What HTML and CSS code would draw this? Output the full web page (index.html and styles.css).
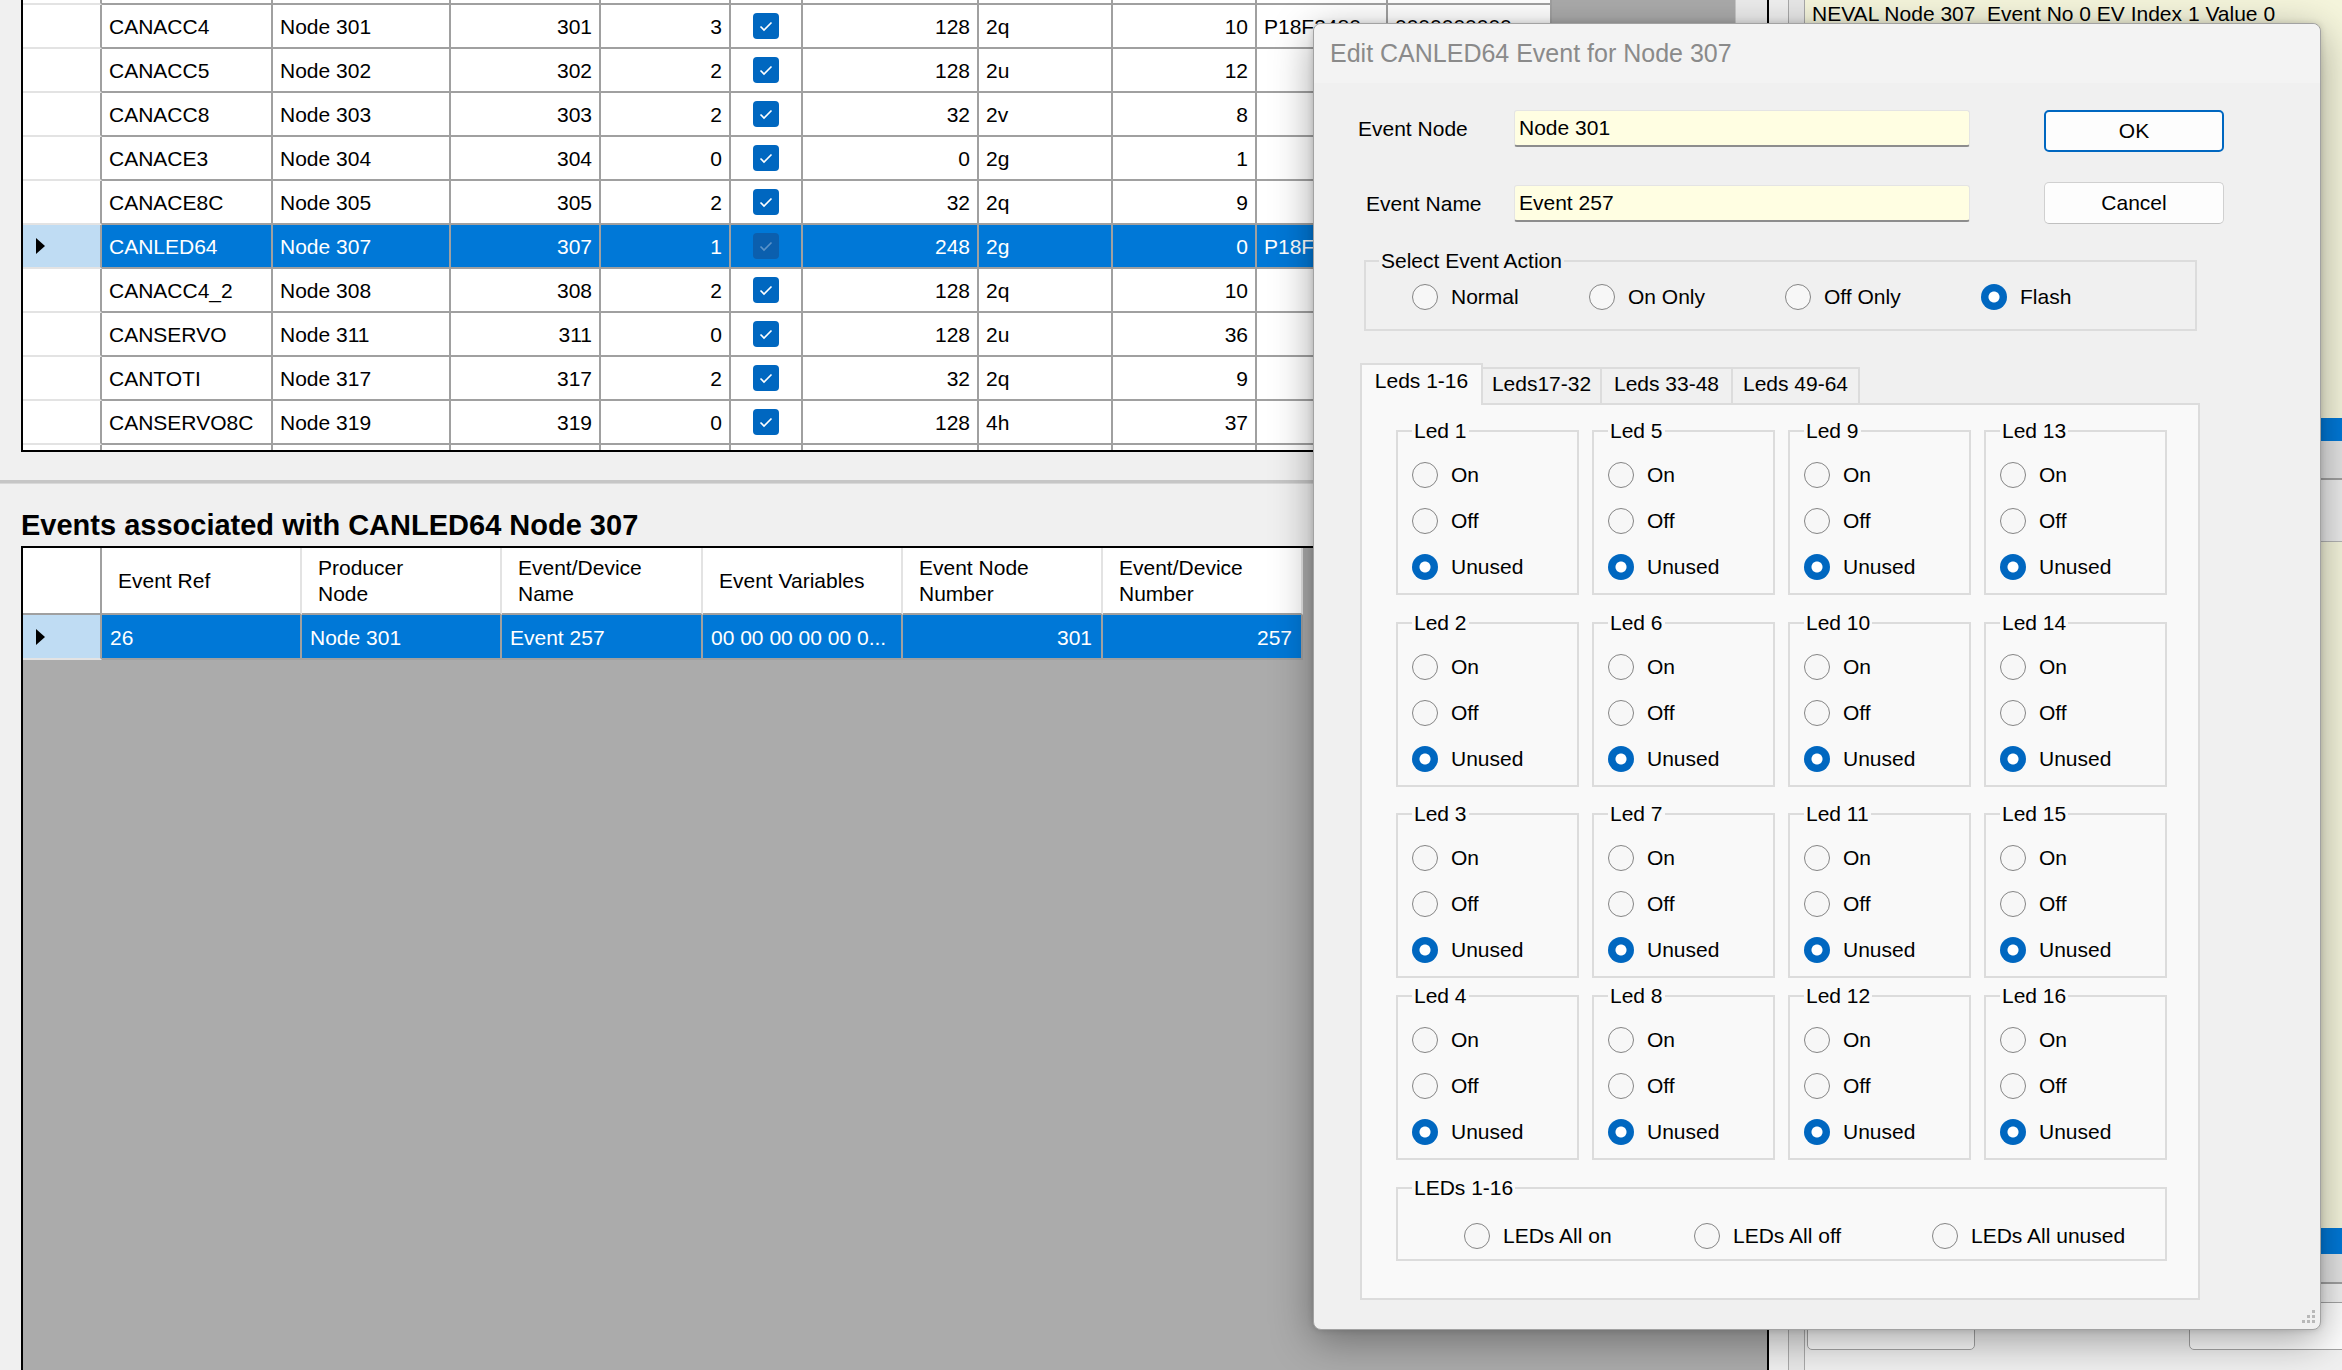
FILE: index.html
```html
<!DOCTYPE html>
<html>
<head>
<meta charset="utf-8">
<link rel="stylesheet" href="styles.css">
</head>
<body>
<div class="app">
  <div class="left">
    <div class="top-grid">
      <div class="rows">
        <div class="row stub"><div class="c rh"></div><div class="c"></div><div class="c"></div><div class="c"></div><div class="c"></div><div class="c"></div><div class="c"></div><div class="c"></div><div class="c"></div><div class="c"></div><div class="c"></div></div>
        <div class="row"><div class="c rh"></div><div class="c">CANACC4</div><div class="c">Node 301</div><div class="c r">301</div><div class="c r">3</div><div class="c ctr"><svg class="cb" width="26" height="26" viewBox="0 0 26 26"><rect width="26" height="26" rx="4" fill="#0067c0"/><path d="M7.5 13.5l3.5 3.5 7.5-7.5" fill="none" stroke="#fff" stroke-width="1.6"/></svg></div><div class="c r">128</div><div class="c">2q</div><div class="c r">10</div><div class="c">P18F2480</div><div class="c">0000000000</div></div>
        <div class="row"><div class="c rh"></div><div class="c">CANACC5</div><div class="c">Node 302</div><div class="c r">302</div><div class="c r">2</div><div class="c ctr"><svg class="cb" width="26" height="26" viewBox="0 0 26 26"><rect width="26" height="26" rx="4" fill="#0067c0"/><path d="M7.5 13.5l3.5 3.5 7.5-7.5" fill="none" stroke="#fff" stroke-width="1.6"/></svg></div><div class="c r">128</div><div class="c">2u</div><div class="c r">12</div><div class="c"></div><div class="c"></div></div>
        <div class="row"><div class="c rh"></div><div class="c">CANACC8</div><div class="c">Node 303</div><div class="c r">303</div><div class="c r">2</div><div class="c ctr"><svg class="cb" width="26" height="26" viewBox="0 0 26 26"><rect width="26" height="26" rx="4" fill="#0067c0"/><path d="M7.5 13.5l3.5 3.5 7.5-7.5" fill="none" stroke="#fff" stroke-width="1.6"/></svg></div><div class="c r">32</div><div class="c">2v</div><div class="c r">8</div><div class="c"></div><div class="c"></div></div>
        <div class="row"><div class="c rh"></div><div class="c">CANACE3</div><div class="c">Node 304</div><div class="c r">304</div><div class="c r">0</div><div class="c ctr"><svg class="cb" width="26" height="26" viewBox="0 0 26 26"><rect width="26" height="26" rx="4" fill="#0067c0"/><path d="M7.5 13.5l3.5 3.5 7.5-7.5" fill="none" stroke="#fff" stroke-width="1.6"/></svg></div><div class="c r">0</div><div class="c">2g</div><div class="c r">1</div><div class="c"></div><div class="c"></div></div>
        <div class="row"><div class="c rh"></div><div class="c">CANACE8C</div><div class="c">Node 305</div><div class="c r">305</div><div class="c r">2</div><div class="c ctr"><svg class="cb" width="26" height="26" viewBox="0 0 26 26"><rect width="26" height="26" rx="4" fill="#0067c0"/><path d="M7.5 13.5l3.5 3.5 7.5-7.5" fill="none" stroke="#fff" stroke-width="1.6"/></svg></div><div class="c r">32</div><div class="c">2q</div><div class="c r">9</div><div class="c"></div><div class="c"></div></div>
        <div class="row sel"><div class="c rh"><span class="tri"></span></div><div class="c">CANLED64</div><div class="c">Node 307</div><div class="c r">307</div><div class="c r">1</div><div class="c ctr"><svg class="cb" width="26" height="26" viewBox="0 0 26 26"><rect width="26" height="26" rx="4" fill="#0b5fae"/><path d="M7.5 13.5l3.5 3.5 7.5-7.5" fill="none" stroke="#5b93c9" stroke-width="1.6"/></svg></div><div class="c r">248</div><div class="c">2g</div><div class="c r">0</div><div class="c">P18F2480</div><div class="c">0000000000</div></div>
        <div class="row"><div class="c rh"></div><div class="c">CANACC4_2</div><div class="c">Node 308</div><div class="c r">308</div><div class="c r">2</div><div class="c ctr"><svg class="cb" width="26" height="26" viewBox="0 0 26 26"><rect width="26" height="26" rx="4" fill="#0067c0"/><path d="M7.5 13.5l3.5 3.5 7.5-7.5" fill="none" stroke="#fff" stroke-width="1.6"/></svg></div><div class="c r">128</div><div class="c">2q</div><div class="c r">10</div><div class="c"></div><div class="c"></div></div>
        <div class="row"><div class="c rh"></div><div class="c">CANSERVO</div><div class="c">Node 311</div><div class="c r">311</div><div class="c r">0</div><div class="c ctr"><svg class="cb" width="26" height="26" viewBox="0 0 26 26"><rect width="26" height="26" rx="4" fill="#0067c0"/><path d="M7.5 13.5l3.5 3.5 7.5-7.5" fill="none" stroke="#fff" stroke-width="1.6"/></svg></div><div class="c r">128</div><div class="c">2u</div><div class="c r">36</div><div class="c"></div><div class="c"></div></div>
        <div class="row"><div class="c rh"></div><div class="c">CANTOTI</div><div class="c">Node 317</div><div class="c r">317</div><div class="c r">2</div><div class="c ctr"><svg class="cb" width="26" height="26" viewBox="0 0 26 26"><rect width="26" height="26" rx="4" fill="#0067c0"/><path d="M7.5 13.5l3.5 3.5 7.5-7.5" fill="none" stroke="#fff" stroke-width="1.6"/></svg></div><div class="c r">32</div><div class="c">2q</div><div class="c r">9</div><div class="c"></div><div class="c"></div></div>
        <div class="row"><div class="c rh"></div><div class="c">CANSERVO8C</div><div class="c">Node 319</div><div class="c r">319</div><div class="c r">0</div><div class="c ctr"><svg class="cb" width="26" height="26" viewBox="0 0 26 26"><rect width="26" height="26" rx="4" fill="#0067c0"/><path d="M7.5 13.5l3.5 3.5 7.5-7.5" fill="none" stroke="#fff" stroke-width="1.6"/></svg></div><div class="c r">128</div><div class="c">4h</div><div class="c r">37</div><div class="c"></div><div class="c"></div></div>
        <div class="row stub-end"><div class="c rh"></div><div class="c"></div><div class="c"></div><div class="c"></div><div class="c"></div><div class="c"></div><div class="c"></div><div class="c"></div><div class="c"></div><div class="c"></div><div class="c"></div></div>
      </div>
      <div class="grid-fill"></div>
      <div class="vscroll"></div>
    </div>

    <div class="splitter"></div>
    <h2 class="events-title">Events associated with CANLED64 Node 307</h2>

    <div class="bottom-grid">
      <div class="rows">
        <div class="row head"><div class="c rh"></div><div class="c">Event Ref</div><div class="c">Producer<br>Node</div><div class="c">Event/Device<br>Name</div><div class="c">Event Variables</div><div class="c">Event Node<br>Number</div><div class="c">Event/Device<br>Number</div></div>
        <div class="row sel"><div class="c rh"><span class="tri"></span></div><div class="c">26</div><div class="c">Node 301</div><div class="c">Event 257</div><div class="c">00 00 00 00 00 0...</div><div class="c r">301</div><div class="c r">257</div></div>
      </div>
    </div>
  </div>

  <div class="right">
    <div class="rp-strip"></div>
    <div class="rp-main">
      <div class="log"><div class="log-line">NEVAL Node 307  Event No 0 EV Index 1 Value 0</div></div>
      <div class="selbar"></div>
      <div class="band1"></div>
      <div class="band2"></div>
      <div class="log2"></div>
      <div class="selbar2"></div>
      <div class="band3"></div>
      <div class="rp-bottom">
        <div class="rp-btn b1"></div>
        <div class="rp-btn b2"></div>
      </div>
    </div>
  </div>

  <div class="dialog">
    <div class="dlg-title">Edit CANLED64 Event for Node 307</div>
    <div class="dlg-body">
      <div class="form-row">
        <div class="lbl n1">Event Node</div>
        <div class="tb">Node 301</div>
        <div class="btn def">OK</div>
      </div>
      <div class="form-row">
        <div class="lbl n2">Event Name</div>
        <div class="tb t2">Event 257</div>
        <div class="btn">Cancel</div>
      </div>

      <fieldset class="gb action">
        <legend>Select Event Action</legend>
        <div class="opts">
          <div class="opt"><span class="rb"></span>Normal</div>
          <div class="opt"><span class="rb"></span>On Only</div>
          <div class="opt"><span class="rb"></span>Off Only</div>
          <div class="opt"><span class="rb on"></span>Flash</div>
        </div>
      </fieldset>

      <div class="tabs">
        <div class="tab active w1">Leds 1-16</div>
        <div class="tab w2">Leds17-32</div>
        <div class="tab w3">Leds 33-48</div>
        <div class="tab w4">Leds 49-64</div>
      </div>
      <div class="panel">
        <div class="led-row">
          <fieldset class="gb led"><legend>Led 1</legend><div class="opt"><span class="rb"></span>On</div><div class="opt"><span class="rb"></span>Off</div><div class="opt"><span class="rb on"></span>Unused</div></fieldset>
          <fieldset class="gb led"><legend>Led 5</legend><div class="opt"><span class="rb"></span>On</div><div class="opt"><span class="rb"></span>Off</div><div class="opt"><span class="rb on"></span>Unused</div></fieldset>
          <fieldset class="gb led"><legend>Led 9</legend><div class="opt"><span class="rb"></span>On</div><div class="opt"><span class="rb"></span>Off</div><div class="opt"><span class="rb on"></span>Unused</div></fieldset>
          <fieldset class="gb led"><legend>Led 13</legend><div class="opt"><span class="rb"></span>On</div><div class="opt"><span class="rb"></span>Off</div><div class="opt"><span class="rb on"></span>Unused</div></fieldset>
        </div>
        <div class="led-row r2">
          <fieldset class="gb led"><legend>Led 2</legend><div class="opt"><span class="rb"></span>On</div><div class="opt"><span class="rb"></span>Off</div><div class="opt"><span class="rb on"></span>Unused</div></fieldset>
          <fieldset class="gb led"><legend>Led 6</legend><div class="opt"><span class="rb"></span>On</div><div class="opt"><span class="rb"></span>Off</div><div class="opt"><span class="rb on"></span>Unused</div></fieldset>
          <fieldset class="gb led"><legend>Led 10</legend><div class="opt"><span class="rb"></span>On</div><div class="opt"><span class="rb"></span>Off</div><div class="opt"><span class="rb on"></span>Unused</div></fieldset>
          <fieldset class="gb led"><legend>Led 14</legend><div class="opt"><span class="rb"></span>On</div><div class="opt"><span class="rb"></span>Off</div><div class="opt"><span class="rb on"></span>Unused</div></fieldset>
        </div>
        <div class="led-row r3">
          <fieldset class="gb led"><legend>Led 3</legend><div class="opt"><span class="rb"></span>On</div><div class="opt"><span class="rb"></span>Off</div><div class="opt"><span class="rb on"></span>Unused</div></fieldset>
          <fieldset class="gb led"><legend>Led 7</legend><div class="opt"><span class="rb"></span>On</div><div class="opt"><span class="rb"></span>Off</div><div class="opt"><span class="rb on"></span>Unused</div></fieldset>
          <fieldset class="gb led"><legend>Led 11</legend><div class="opt"><span class="rb"></span>On</div><div class="opt"><span class="rb"></span>Off</div><div class="opt"><span class="rb on"></span>Unused</div></fieldset>
          <fieldset class="gb led"><legend>Led 15</legend><div class="opt"><span class="rb"></span>On</div><div class="opt"><span class="rb"></span>Off</div><div class="opt"><span class="rb on"></span>Unused</div></fieldset>
        </div>
        <div class="led-row r4">
          <fieldset class="gb led"><legend>Led 4</legend><div class="opt"><span class="rb"></span>On</div><div class="opt"><span class="rb"></span>Off</div><div class="opt"><span class="rb on"></span>Unused</div></fieldset>
          <fieldset class="gb led"><legend>Led 8</legend><div class="opt"><span class="rb"></span>On</div><div class="opt"><span class="rb"></span>Off</div><div class="opt"><span class="rb on"></span>Unused</div></fieldset>
          <fieldset class="gb led"><legend>Led 12</legend><div class="opt"><span class="rb"></span>On</div><div class="opt"><span class="rb"></span>Off</div><div class="opt"><span class="rb on"></span>Unused</div></fieldset>
          <fieldset class="gb led"><legend>Led 16</legend><div class="opt"><span class="rb"></span>On</div><div class="opt"><span class="rb"></span>Off</div><div class="opt"><span class="rb on"></span>Unused</div></fieldset>
        </div>
        <fieldset class="gb all">
          <legend>LEDs 1-16</legend>
          <div class="opts">
            <div class="opt"><span class="rb"></span>LEDs All on</div>
            <div class="opt"><span class="rb"></span>LEDs All off</div>
            <div class="opt"><span class="rb"></span>LEDs All unused</div>
          </div>
        </fieldset>
      </div>
    </div>
    <svg class="grip" width="20" height="20" viewBox="0 0 20 20"><g fill="#b8b8b8"><rect x="15" y="3" width="3" height="3"/><rect x="10" y="8" width="3" height="3"/><rect x="15" y="8" width="3" height="3"/><rect x="5" y="13" width="3" height="3"/><rect x="10" y="13" width="3" height="3"/><rect x="15" y="13" width="3" height="3"/></g></svg>
  </div>
</div>
</body>
</html>
```

FILE: styles.css
```css
* { box-sizing: border-box; }
html, body { margin: 0; padding: 0; }
body {
  width: 2342px;
  height: 1370px;
  overflow: hidden;
  background: #f0f0f0;
  font-family: "Liberation Sans", Arial, sans-serif;
  font-size: 21px;
  color: #000;
}
.app { display: flex; height: 1370px; position: relative; }

/* ---------- left pane ---------- */
.left { width: 1769px; flex: none; display: flex; flex-direction: column; }

.top-grid {
  margin-left: 21px;
  height: 452px;
  flex: none;
  display: flex;
  border: 2px solid #000;
  border-top: none;
  background: #ababab;
}
.top-grid .rows { width: 1529px; flex: none; }
.top-grid .row {
  display: grid;
  grid-template-columns: 79px 171px 178px 150px 130px 72px 176px 134px 144px 131px 164px;
  height: 44px;
  background: #fff;
}
.top-grid .row.stub, .top-grid .row.stub-end { height: 5px; }
.stub .c, .stub-end .c { padding-top: 0; }
.stub-end .c { border-bottom: none; }

.c {
  border-right: 2px solid #a0a0a0;
  border-bottom: 2px solid #a0a0a0;
  padding: 2px 7px 0;
  display: flex;
  align-items: center;
  white-space: nowrap;
  overflow: hidden;
}
.c.r { justify-content: flex-end; }
.c.ctr { justify-content: center; padding: 0; }
.c.rh { border-bottom-color: #e3e3e3; background: #fff; padding: 0 0 0 13px; }
.row.sel { background: #0078d7; color: #fff; }
.row.sel .c.rh { background: #bfdcf3; }
.cb { display: block; }

.tri {
  width: 0; height: 0;
  border-left: 9px solid #000;
  border-top: 8px solid transparent;
  border-bottom: 8px solid transparent;
}

.grid-fill { flex: 1; }
.vscroll { width: 32px; flex: none; background: #ececec; border-left: 1px solid #c9c9c9; }

.splitter {
  margin-top: 28px;
  height: 4px;
  background: #c6c6c6;
  border-bottom: 1px solid #d8d8d8;
  flex: none;
}
.events-title {
  margin: 24px 0 4px 21px;
  font-size: 29px;
  line-height: 34px;
  font-weight: bold;
  white-space: nowrap;
}

.bottom-grid {
  margin-left: 21px;
  flex: 1;
  border: 2px solid #000;
  border-bottom: none;
  background: #ababab;
}
.bottom-grid .rows { width: 1280px; }
.bottom-grid .row {
  display: grid;
  grid-template-columns: 79px 200px 200px 201px 200px 200px 200px;
  background: #fff;
}
.bottom-grid .row.head { height: 67px; }
.head .c { border-right-color: #e3e3e3; padding: 1px 7px 0 16px; line-height: 26px; white-space: normal; }
.head .c.rh { border-right-color: #a0a0a0; border-bottom-color: #a0a0a0; }
.bottom-grid .row.sel { height: 45px; background: #0078d7; }
.bottom-grid .sel .c { padding: 2px 9px 0 8px; }
.bottom-grid .sel .c.rh { padding: 0 0 0 13px; }

/* ---------- right pane ---------- */
.right { flex: 1; display: flex; background: #f0f0f0; padding-left: 19px; }
.rp-strip { width: 17px; flex: none; background: #e8e8e8; border-left: 1px solid #a9a9a9; border-right: 1px solid #a9a9a9; }
.rp-main { flex: 1; display: flex; flex-direction: column; }
.log { height: 418px; background: #f5f5dc; padding: 2px 0 0 7px; }
.log-line { line-height: 24px; white-space: pre; }
.selbar { height: 23px; background: #0078d7; }
.band1 { height: 39px; background: #e3e3e3; border-bottom: 2px solid #a0a0a0; }
.band2 { height: 62px; background: #ebebeb; border-bottom: 1px solid #b4b4b4; }
.log2 { height: 686px; background: #f5f5dc; }
.selbar2 { height: 26px; background: #0078d7; }
.band3 { height: 30px; background: #e3e3e3; border-bottom: 2px solid #a0a0a0; }
.rp-bottom { flex: 1; display: flex; align-items: flex-end; padding-bottom: 20px; }
.rp-btn { height: 48px; border: 1px solid #a3a3a3; border-radius: 5px; background: #fdfdfd; }
.rp-btn.b1 { margin-left: 2px; width: 168px; }
.rp-btn.b2 { margin-left: 214px; width: 200px; }

/* ---------- dialog ---------- */
.dialog {
  position: absolute;
  left: 1313px;
  top: 23px;
  width: 1008px;
  height: 1307px;
  background: #f0f0f0;
  border: 1px solid #a2a2a2;
  border-radius: 8px;
  box-shadow: 0 10px 42px rgba(0, 0, 0, 0.36), 0 0 6px rgba(0, 0, 0, 0.15);
}
.dlg-title {
  height: 59px;
  line-height: 59px;
  padding-left: 16px;
  font-size: 25px;
  color: #8a8a8a;
  background: #f3f3f3;
  border-radius: 8px 8px 0 0;
  white-space: nowrap;
}
.dlg-body { padding-top: 27px; }

.form-row { display: flex; height: 42px; }
.form-row + .form-row { margin-top: 30px; }
.lbl { flex: none; line-height: 37px; white-space: nowrap; }
.lbl.n1 { margin-left: 44px; width: 156px; }
.lbl.n2 { margin-left: 52px; width: 148px; margin-top: 3px; }
.tb {
  flex: none;
  width: 456px;
  height: 37px;
  background: #fffee2;
  border: 1px solid #e4e4e4;
  border-bottom: 2px solid #8d8d8d;
  border-radius: 3px;
  padding-left: 4px;
  line-height: 34px;
}
.tb.t2 { margin-top: 3px; }
.btn {
  flex: none;
  margin-left: 74px;
  width: 180px;
  height: 42px;
  border: 1px solid #d0d0d0;
  border-bottom-color: #c0c0c0;
  border-radius: 5px;
  background: #fdfdfd;
  display: flex;
  align-items: center;
  justify-content: center;
}
.btn.def { border: 2px solid #0067c0; }

.gb {
  margin: 0;
  min-width: 0;
  border: 2px solid #dcdcdc;
}
.gb legend { padding: 0 2px; line-height: 22px; font-size: 21px; white-space: nowrap; }

.opt { display: flex; align-items: center; gap: 13px; white-space: nowrap; }
.rb {
  flex: none;
  width: 26px;
  height: 26px;
  border-radius: 50%;
  border: 1.5px solid #858585;
  background: #f7f7f7;
}
.rb.on {
  border: none;
  background: radial-gradient(circle, #ffffff 0 5px, #0067c0 6px);
}

.action { margin: 26px 0 0 50px; width: 833px; padding: 10px 0 17px 13px; }
.action .opts { display: grid; grid-template-columns: 177px 196px 196px auto; margin-left: 33px; }
.action .opt { height: 30px; }

.tabs { display: flex; align-items: flex-end; height: 40px; margin: 32px 0 0 46px; }
.tab {
  height: 36px;
  border: 2px solid #dcdcdc;
  border-left: none;
  border-bottom: none;
  background: #f0f0f0;
  text-align: center;
  padding-top: 4px;
  line-height: 22px;
  white-space: nowrap;
}
.tab.active {
  height: 42px;
  margin-bottom: -2px;
  border-left: 2px solid #dcdcdc;
  background: #f9f9f9;
  padding-top: 5px;
  position: relative;
  z-index: 1;
}
.tab.w1 { width: 123px; }
.tab.w2 { width: 119px; }
.tab.w3 { width: 131px; }
.tab.w4 { width: 127px; }

.panel {
  width: 840px;
  height: 897px;
  margin-left: 46px;
  background: #f9f9f9;
  border: 2px solid #dcdcdc;
  padding: 15px 0 0 34px;
}
.led-row { display: grid; grid-template-columns: repeat(4, 183px); column-gap: 13px; }
.led-row.r2 { margin-top: 17px; }
.led-row.r3 { margin-top: 16px; }
.led-row.r4 { margin-top: 7px; }
.led { width: 183px; padding: 10px 0 3px 14px; }
.led .opt { height: 46px; }

.all { margin-top: 17px; width: 771px; padding: 22px 0 8px 14px; }
.all .opts { display: grid; grid-template-columns: 230px 238px auto; margin-left: 52px; }
.all .opt { height: 30px; }

.grip { position: absolute; right: 3px; bottom: 2px; }
```
